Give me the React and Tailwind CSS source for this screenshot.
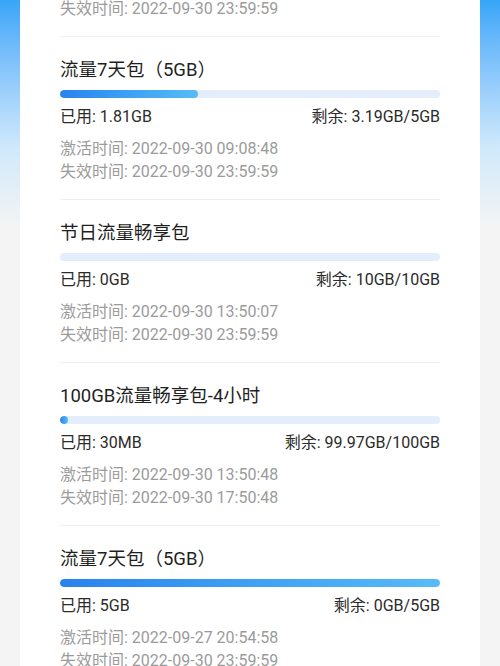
import React from 'react'

const PACKAGES = [
  {
    name: '流量7天包（5GB）',
    used: '2GB',
    left: '3GB/5GB',
    pct: 40,
    start: '2022-09-29 10:12:30',
    end: '2022-09-30 23:59:59',
  },
  {
    name: '流量7天包（5GB）',
    used: '1.81GB',
    left: '3.19GB/5GB',
    pct: 36.2,
    start: '2022-09-30 09:08:48',
    end: '2022-09-30 23:59:59',
  },
  {
    name: '节日流量畅享包',
    used: '0GB',
    left: '10GB/10GB',
    pct: 0,
    start: '2022-09-30 13:50:07',
    end: '2022-09-30 23:59:59',
  },
  {
    name: '100GB流量畅享包-4小时',
    used: '30MB',
    left: '99.97GB/100GB',
    pct: 0.03,
    start: '2022-09-30 13:50:48',
    end: '2022-09-30 17:50:48',
  },
  {
    name: '流量7天包（5GB）',
    used: '5GB',
    left: '0GB/5GB',
    pct: 100,
    start: '2022-09-27 20:54:58',
    end: '2022-09-30 23:59:59',
  },
]

function UsageBar({ pct }) {
  return (
    <div className="h-[8px] w-full rounded-full bg-[#e4edfc] overflow-hidden">
      {pct > 0 && (
        <div
          className="h-full min-w-[8px] rounded-full bg-gradient-to-r from-[#2883ee] to-[#58bbf8]"
          style={{ width: `${pct}%` }}
        />
      )}
    </div>
  )
}

function PackageRow({ pkg }) {
  return (
    <div className="pt-[21px] pb-[16.5px] border-b border-[#efefef]">
      <div className="text-[18.5px] leading-[24px] text-[#1f1f1f]">{pkg.name}</div>
      <div className="mt-[8px]">
        <UsageBar pct={pkg.pct} />
      </div>
      <div className="mt-[8px] flex justify-between text-[16px] leading-[22px] text-[#2b2b2b]">
        <span>已用: {pkg.used}</span>
        <span>剩余: {pkg.left}</span>
      </div>
      <div className="mt-[8.5px] text-[16px] leading-[23px] text-[#9b9b9b]">
        <div>激活时间: {pkg.start}</div>
        <div>失效时间: {pkg.end}</div>
      </div>
    </div>
  )
}

export default function App() {
  return (
    <div
      className="relative w-[500px] h-[666px] overflow-hidden bg-gradient-to-b from-[#36a5f8] via-[#cfe8fb] via-[22%] to-[#f4f4f4] to-[34%]"
      style={{ fontFamily: 'Roboto, "Noto Sans CJK SC", sans-serif' }}
    >
      <div className="mx-[20px] mt-[-126px] bg-white px-[40px] pb-[40px]">
        {PACKAGES.map((pkg, i) => (
          <PackageRow key={i} pkg={pkg} />
        ))}
      </div>
    </div>
  )
}
